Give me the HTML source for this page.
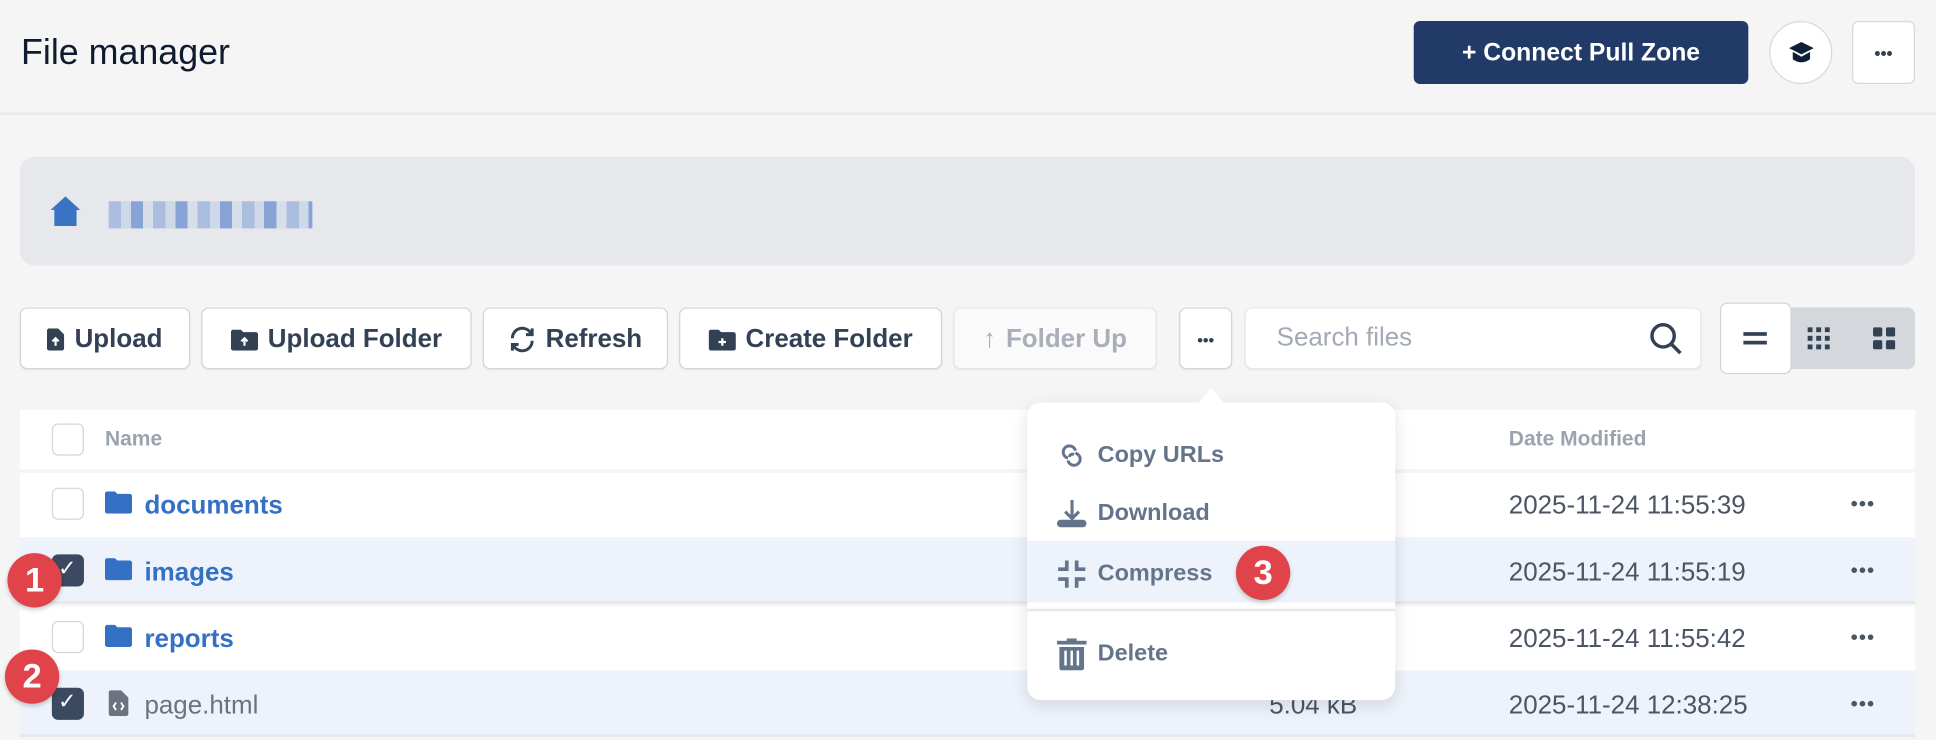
<!DOCTYPE html>
<html><head><meta charset="utf-8"><style>
*{box-sizing:border-box;margin:0;padding:0}
html,body{width:1936px;height:739px;overflow:hidden;background:#f5f5f5;font-family:"Liberation Sans",sans-serif}
#s{position:absolute;left:0;top:0;width:1568px;height:599px;transform:scale(1.23469);transform-origin:0 0}
.a{position:absolute}
.btn{position:absolute;top:249px;height:50px;background:#fff;border:1.5px solid #d1d5db;border-radius:6px;display:flex;align-items:center;justify-content:center;gap:8px;font-size:21px;font-weight:bold;color:#334155;box-shadow:0 1px 1px rgba(0,0,0,.05);padding-top:2px}
.row{position:absolute;left:16px;width:1535px;height:53px}
.cb{position:absolute;left:42px;width:26px;height:26px;border:1.5px solid #d1d5db;border-radius:5px;background:#fff}
.cbc{background:#3b4a60;border-color:#3b4a60}
.nm{position:absolute;left:117px;font-size:21px;font-weight:bold;color:#3470c4}
.dt{position:absolute;left:1222px;font-size:21px;color:#4b5563}
.dots{position:absolute;left:1499px;font-size:16px;color:#4b5563;font-weight:bold;letter-spacing:1px}
.badge{position:absolute;width:44px;height:44px;border-radius:50%;background:#e0444a;color:#fff;font-weight:bold;font-size:28px;display:flex;align-items:center;justify-content:center;box-shadow:0 2px 4px rgba(0,0,0,.2)}
.mi{position:absolute;left:832px;width:298px;font-size:19px;font-weight:bold;color:#64748b;display:flex;align-items:center}
.mi svg{position:absolute;left:24px}
.mi span{position:absolute;left:57px}
</style></head><body><div id="s">
<div class="a" style="left:0;top:0;width:1568px;height:93px;border-bottom:2px solid #e5e7eb"></div>
<div class="a" style="left:17px;top:27px;font-size:29px;color:#0f1b2e">File manager</div>
<div class="a" style="left:1145px;top:17px;width:271px;height:51px;background:#223a68;border-radius:5px;color:#fff;font-weight:bold;font-size:20px;display:flex;align-items:center;justify-content:center;padding-top:2px">+ Connect Pull Zone</div>
<div class="a" style="left:1433px;top:17px;width:51px;height:51px;border-radius:50%;background:#fff;border:1.5px solid #d6d9de;display:flex;align-items:center;justify-content:center"><svg width="22" height="20" viewBox="0 0 22 20"><path d="M11 1 L21 6 L11 11 L1 6Z" fill="#0f1f38"/><path d="M4 9 V15 Q11 20 18 15 V9 L11 13 Z" fill="#0f1f38"/></svg></div>
<div class="a" style="left:1500px;top:17px;width:51px;height:51px;border-radius:5px;background:#fff;border:1.5px solid #d6d9de;display:flex;align-items:center;justify-content:center;font-weight:bold;color:#334155;font-size:14px">•••</div>

<div class="a" style="left:16px;top:127px;width:1535px;height:88px;background:#e7e8ec;border-radius:12px"></div>
<svg class="a" style="left:40px;top:158px" width="26" height="25" viewBox="0 0 26 25"><path d="M13 1 L25 12 H22 V25 H4 V12 H1Z" fill="#3a72c4"/></svg>
<div class="a" style="left:88px;top:163px;width:165px;height:22px;background:repeating-linear-gradient(90deg,#9db4dc 0 10px,#c9d4e8 10px 18px,#6f93cf 18px 28px,#d3dbea 28px 36px);opacity:.8"></div>

<div class="btn" style="left:16px;width:138px"><svg width="14" height="18" viewBox="0 0 14 18"><path d="M0 2a2 2 0 0 1 2-2h7l5 5v11a2 2 0 0 1-2 2H2a2 2 0 0 1-2-2z" fill="#334155"/><path d="M7 14V8M4.5 10.5 7 8l2.5 2.5" stroke="#fff" stroke-width="1.8" fill="none"/></svg>Upload</div>
<div class="btn" style="left:163px;width:219px"><svg width="22" height="17" viewBox="0 0 22 17"><path d="M0 2a2 2 0 0 1 2-2h6l2 2h10a2 2 0 0 1 2 2v11a2 2 0 0 1-2 2H2a2 2 0 0 1-2-2z" fill="#334155"/><path d="M11 13V7M8.5 9.5 11 7l2.5 2.5" stroke="#fff" stroke-width="1.8" fill="none"/></svg>Upload Folder</div>
<div class="btn" style="left:391px;width:150px"><svg width="22" height="22" viewBox="0 0 22 22" fill="none" stroke="#334155" stroke-width="2.4"><path d="M3 10a8 8 0 0 1 15-4"/><path d="M19 2v5h-5"/><path d="M19 12a8 8 0 0 1-15 4"/><path d="M3 20v-5h5"/></svg>Refresh</div>
<div class="btn" style="left:550px;width:213px"><svg width="22" height="17" viewBox="0 0 22 17"><path d="M0 2a2 2 0 0 1 2-2h6l2 2h10a2 2 0 0 1 2 2v11a2 2 0 0 1-2 2H2a2 2 0 0 1-2-2z" fill="#334155"/><path d="M11 7v6M8 10h6" stroke="#fff" stroke-width="1.8"/></svg>Create Folder</div>
<div class="btn" style="left:772px;width:165px;color:#a9afb8;background:#fafafa;border-color:#e3e5e8"><span style="font-weight:normal">↑</span>Folder Up</div>
<div class="btn" style="left:955px;width:43px;font-size:13px">•••</div>
<div class="btn" style="left:1008px;width:370px;justify-content:space-between;padding:0 14px 0 25px;font-weight:normal;color:#a3aab5;border-color:#e5e7eb">Search files<svg width="28" height="28" viewBox="0 0 28 28" fill="none" stroke="#334155" stroke-width="2.8"><circle cx="12" cy="12" r="9"/><path d="M19 19l7 7"/></svg></div>
<div class="a" style="left:1450px;top:249px;width:101px;height:50px;background:#d4d7dc;border-radius:0 6px 6px 0"></div>
<div class="a" style="left:1393px;top:245px;width:58px;height:58px;background:#fff;border:1.5px solid #d1d5db;border-radius:6px"></div>
<div class="a" style="left:1412px;top:269px;width:19px;height:3px;background:#334155"></div><div class="a" style="left:1412px;top:276px;width:19px;height:3px;background:#334155"></div>
<svg class="a" style="left:1464px;top:265px" width="18" height="18" viewBox="0 0 18 18" fill="#334155"><rect x="0" y="0" width="4" height="4"/><rect x="7" y="0" width="4" height="4"/><rect x="14" y="0" width="4" height="4"/><rect x="0" y="7" width="4" height="4"/><rect x="7" y="7" width="4" height="4"/><rect x="14" y="7" width="4" height="4"/><rect x="0" y="14" width="4" height="4"/><rect x="7" y="14" width="4" height="4"/><rect x="14" y="14" width="4" height="4"/></svg>
<svg class="a" style="left:1517px;top:265px" width="18" height="18" viewBox="0 0 18 18" fill="#334155"><rect x="0" y="0" width="7.5" height="7.5" rx="1.5"/><rect x="10.5" y="0" width="7.5" height="7.5" rx="1.5"/><rect x="0" y="10.5" width="7.5" height="7.5" rx="1.5"/><rect x="10.5" y="10.5" width="7.5" height="7.5" rx="1.5"/></svg>

<div class="row" style="top:332px;height:48px;background:#fff"></div>
<div class="cb" style="top:343px"></div>
<div class="a" style="left:85px;top:346px;font-size:17px;font-weight:bold;color:#9aa3ae">Name</div>
<div class="a" style="left:1222px;top:346px;font-size:17px;font-weight:bold;color:#9aa3ae">Date Modified</div>

<div class="row" style="top:383px;height:52px;background:#fff"></div>
<div class="row" style="top:436px;background:#eef3fb;border-bottom:2px solid #e5e7eb"></div>
<div class="row" style="top:491px;background:#fff"></div>
<div class="row" style="top:543px;height:54px;background:#eef3fb;border-bottom:2px solid #e5e7eb"></div>

<div class="cb" style="top:395px"></div>
<div class="cb cbc" style="top:449px"></div><div class="a" style="left:47px;top:450px;color:#fff;font-size:18px">✓</div>
<div class="cb" style="top:503px"></div>
<div class="cb cbc" style="top:557px"></div><div class="a" style="left:47px;top:558px;color:#fff;font-size:18px">✓</div>

<svg class="a" style="left:85px;top:398px" width="22" height="18" viewBox="0 0 22 18"><path d="M0 2a2 2 0 0 1 2-2h6l2 2h10a2 2 0 0 1 2 2v12a2 2 0 0 1-2 2H2a2 2 0 0 1-2-2z" fill="#3470c4"/></svg>
<div class="nm" style="top:398px">documents</div>
<svg class="a" style="left:85px;top:452px" width="22" height="18" viewBox="0 0 22 18"><path d="M0 2a2 2 0 0 1 2-2h6l2 2h10a2 2 0 0 1 2 2v12a2 2 0 0 1-2 2H2a2 2 0 0 1-2-2z" fill="#3470c4"/></svg>
<div class="nm" style="top:452px">images</div>
<svg class="a" style="left:85px;top:506px" width="22" height="18" viewBox="0 0 22 18"><path d="M0 2a2 2 0 0 1 2-2h6l2 2h10a2 2 0 0 1 2 2v12a2 2 0 0 1-2 2H2a2 2 0 0 1-2-2z" fill="#3470c4"/></svg>
<div class="nm" style="top:506px">reports</div>
<svg class="a" style="left:88px;top:559px" width="16" height="21" viewBox="0 0 16 21"><path d="M0 2a2 2 0 0 1 2-2h8l6 6v13a2 2 0 0 1-2 2H2a2 2 0 0 1-2-2z" fill="#6b7280"/><path d="M6 10l-2 3 2 3M10 10l2 3-2 3" stroke="#fff" stroke-width="1.5" fill="none"/></svg>
<div class="nm" style="top:560px;color:#6b7280;font-weight:normal">page.html</div>
<div class="a" style="left:1028px;top:560px;font-size:21px;color:#4b5563">5.04 kB</div>

<div class="dt" style="top:398px">2025-11-24 11:55:39</div>
<div class="dt" style="top:452px">2025-11-24 11:55:19</div>
<div class="dt" style="top:506px">2025-11-24 11:55:42</div>
<div class="dt" style="top:560px">2025-11-24 12:38:25</div>
<div class="dots" style="top:400px">•••</div>
<div class="dots" style="top:454px">•••</div>
<div class="dots" style="top:508px">•••</div>
<div class="dots" style="top:562px">•••</div>

<div class="a" style="left:832px;top:326px;width:298px;height:241px;background:#fff;border-radius:11px;box-shadow:0 4px 14px rgba(0,0,0,.12)"></div>
<div class="a" style="left:970px;top:314px;width:0;height:0;border-left:11px solid transparent;border-right:11px solid transparent;border-bottom:13px solid #fff"></div>
<div class="a" style="left:832px;top:438px;width:298px;height:50px;background:#eef3fb"></div>
<div class="a" style="left:832px;top:493px;width:298px;height:2px;background:#e5e7eb"></div>
<div class="mi" style="top:356px;height:26px"><svg width="24" height="24" viewBox="0 0 24 24" fill="none" stroke="#64748b" stroke-width="2.4"><path d="M9 14a5 5 0 1 1 6-6"/><path d="M15 10a5 5 0 1 1-6 6"/><path d="M10 13a3 3 0 0 1 4-2"/></svg><span>Copy URLs</span></div>
<div class="mi" style="top:403px;height:26px"><svg width="24" height="24" viewBox="0 0 24 24" fill="#64748b"><path d="M11 1h2.5v12l3.5-3.5 1.8 1.8-6.5 6.5-6.5-6.5 1.8-1.8 3.4 3.5z"/><rect x="0" y="17" width="24" height="6" rx="3"/></svg><span>Download</span></div>
<div class="mi" style="top:452px;height:26px"><svg width="24" height="24" viewBox="0 0 24 24" fill="none" stroke="#64748b" stroke-width="3"><path d="M8 1v7H1M16 1v7h7M8 23v-7H1M16 23v-7h7"/></svg><span>Compress</span></div>
<div class="mi" style="top:517px;height:26px"><svg width="24" height="26" viewBox="0 0 24 26" fill="#64748b"><rect x="0" y="2" width="24" height="3"/><rect x="8" y="0" width="8" height="3"/><path d="M2 7h20v17a2 2 0 0 1-2 2H4a2 2 0 0 1-2-2z"/><path d="M7 10v12M12 10v12M17 10v12" stroke="#fff" stroke-width="2"/></svg><span>Delete</span></div>

<div class="badge" style="left:6px;top:448px">1</div>
<div class="badge" style="left:4px;top:526px">2</div>
<div class="badge" style="left:1001px;top:442px">3</div>
</div></body></html>
